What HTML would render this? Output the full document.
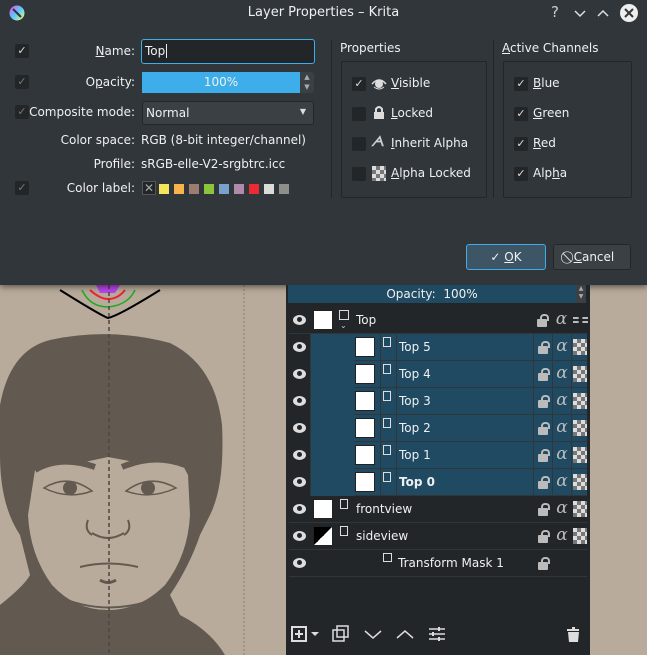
<!DOCTYPE html>
<html><head><meta charset="utf-8"><style>
*{box-sizing:border-box;margin:0;padding:0}
body{width:647px;height:655px;overflow:hidden;background:#b8ab9b;font-family:"DejaVu Sans","Liberation Sans",sans-serif;font-size:12px;color:#eff0f1;position:relative}
.abs{position:absolute}
#dlg{left:0;top:0;width:647px;height:285px;background:#31363b;box-shadow:0 2px 6px rgba(0,0,0,.5)}
.cb{position:absolute;width:14px;height:14px;background:#232629;border-radius:2px;color:#ddd;font-size:11px;line-height:14px;text-align:center}
.lbl{position:absolute;text-align:right;width:120px;left:15px;color:#eff0f1}
.u{text-decoration:underline}
#panel{left:286px;top:285px;width:304px;height:370px;background:#232629}
.alpha{font-family:"DejaVu Serif",serif;font-style:italic;color:#bbb;font-size:17px;line-height:24px;text-align:center}
.chk{background:repeating-conic-gradient(#777 0 25%,#ddd 0 50%) 0 0/8px 8px;}
.r{position:absolute;left:289px;width:298px;height:26px}
.c{position:absolute;top:0;height:26px}
.sel{background:#1f4a62}
.nm{font-size:12px;line-height:26px;padding-left:2px}
.th{position:absolute;width:20px;height:20px;background:#fff;border:1px solid #222;top:3px}
.eyeic{position:absolute;left:4px;top:8px;width:13px;height:10px;border-radius:50%;background:#ddd}
.eyeic:after{content:"";position:absolute;left:4px;top:2px;width:5px;height:5px;border-radius:50%;background:#232629}
.lk{position:absolute;width:10px;height:8px;background:#bbb;top:12px;border-radius:1px}
.lk:before{content:"";position:absolute;left:3px;top:-5px;width:5px;height:5px;border:2px solid #bbb;border-bottom:none;border-radius:4px 4px 0 0}
.doc{position:absolute;width:8px;height:10px;border:1px solid #ddd;top:3px}
</style></head><body>
<svg class="abs" style="left:0;top:285px" width="290" height="370">
<line x1="244" y1="0" x2="244" y2="370" stroke="#8a8070" stroke-width="1" stroke-dasharray="2,2"/>
<path d="M60 5 Q100 30 108 33 Q120 30 160 5" stroke="#000" stroke-width="2" fill="none"/>
<path d="M82 5 Q90 22 108 22 Q128 20 135 5" stroke="#2a2" stroke-width="1.5" fill="none"/>
<path d="M90 5 Q100 14 108 14 Q118 14 125 5" stroke="#e23" stroke-width="2" fill="none"/>
<path d="M96 0 L120 0 L115 8 L100 8Z" fill="#b4e"/>
<path d="M0 120 Q10 65 50 55 Q110 42 170 58 Q215 80 222 140 Q225 200 210 230 L200 250 Q190 280 170 310 L180 330 Q210 345 225 370 L0 370 L0 320 Q25 300 30 290 L20 250 Q0 220 0 170Z" fill="#625a50"/>
<path d="M35 185 L60 175 L80 178 L108 172 L140 178 L180 175 L188 190 L190 230 Q188 270 165 300 Q140 325 108 325 Q75 325 52 300 Q30 270 28 230Z" fill="#b8ab9b"/>
<path d="M35 185 Q60 170 95 182 M122 182 Q155 168 185 180" stroke="#625a50" stroke-width="6" fill="none"/>
<path d="M44 203 Q68 188 92 206 Q68 215 44 203Z M126 206 Q150 188 176 203 Q150 215 126 206Z" fill="none" stroke="#625a50" stroke-width="1.5"/>
<circle cx="70" cy="203" r="7" fill="#625a50"/><circle cx="148" cy="203" r="7" fill="#625a50"/>
<path d="M88 235 Q84 245 92 250 M128 235 Q132 245 124 250 M92 248 Q108 258 124 248" stroke="#625a50" stroke-width="2" fill="none"/>
<path d="M80 282 Q108 275 138 282" stroke="#625a50" stroke-width="2" fill="none"/>
<path d="M100 295 Q108 300 116 295" stroke="#625a50" stroke-width="3" fill="none"/>
<path d="M55 310 Q108 335 165 310" stroke="#625a50" stroke-width="2" fill="none"/>
<line x1="109" y1="0" x2="109" y2="370" stroke="#4e4840" stroke-width="1.5" stroke-dasharray="4,3"/>
</svg>

<div id="dlg" class="abs">
 <svg class="abs" style="left:9px;top:5px" width="16" height="16"><defs><linearGradient id="g" x1="0" y1="0" x2="1" y2="1"><stop offset="0" stop-color="#f4e"/><stop offset=".5" stop-color="#5cf"/><stop offset="1" stop-color="#ff6"/></linearGradient></defs><circle cx="8" cy="8" r="7.5" fill="url(#g)"/><path d="M4 4 L12 12" stroke="#333" stroke-width="2"/></svg>
 <div class="abs" style="left:0;width:647px;top:5px;text-align:center;font-size:13px">Layer Properties – Krita</div>
 <div class="abs" style="left:551px;top:3px;font-size:15px;color:#ccc">?</div>
 <svg class="abs" style="left:573px;top:3px" width="70" height="20"><path d="M2 8 L7 13 L12 8 M25 13 L30 8 L35 13" stroke="#ddd" stroke-width="1.5" fill="none"/><circle cx="56" cy="10" r="9" fill="#eee"/><path d="M52 6 L60 14 M60 6 L52 14" stroke="#31363b" stroke-width="2"/></svg>

 <div class="cb" style="left:15px;top:44px">✓</div>
 <div class="cb" style="left:15px;top:75px;color:#777">✓</div>
 <div class="cb" style="left:15px;top:105px;color:#777">✓</div>
 <div class="cb" style="left:15px;top:181px;color:#777">✓</div>
 <div class="lbl" style="top:44px"><span class="u">N</span>ame:</div>
 <div class="lbl" style="top:75px">O<span class="u">p</span>acity:</div>
 <div class="lbl" style="top:105px">Composite mode:</div>
 <div class="lbl" style="top:133px">Color space:</div>
 <div class="lbl" style="top:157px">Profile:</div>
 <div class="lbl" style="top:181px">Color label:</div>
 <div class="abs" style="left:141px;top:39px;width:174px;height:25px;background:#232629;border:1px solid #3daee9;border-radius:3px;padding:4px 3px">Top<span style="border-left:1px solid #eee;margin-left:1px"></span></div>
 <div class="abs" style="left:142px;top:72px;width:158px;height:21px;background:#3daee9;text-align:center;line-height:21px">100%</div>
 <div class="abs" style="left:300px;top:72px;width:14px;height:21px;background:#3b4045;border-radius:0 3px 3px 0;font-size:7px;color:#aaa;text-align:center;line-height:10px">▲<br>▼</div>
 <div class="abs" style="left:142px;top:101px;width:172px;height:24px;background:#3b4045;border:1px solid #24272a;border-radius:3px;padding:4px 3px">Normal<span style="position:absolute;right:7px;top:5px;font-size:8px;color:#ddd">▼</span></div>
 <div class="abs" style="left:141px;top:133px">RGB (8-bit integer/channel)</div>
 <div class="abs" style="left:141px;top:157px">sRGB-elle-V2-srgbtrc.icc</div>
 <div class="abs" style="left:142px;top:181px;width:14px;height:14px;border:1px solid #555;background:#232629;color:#aaa;font-size:12px;line-height:12px;text-align:center">✕</div>
 <div class="abs" style="left:159px;top:184px;width:10px;height:10px;background:#f5e55a"></div>
 <div class="abs" style="left:174px;top:184px;width:10px;height:10px;background:#f9b34c"></div>
 <div class="abs" style="left:189px;top:184px;width:10px;height:10px;background:#9c7d6f"></div>
 <div class="abs" style="left:204px;top:184px;width:10px;height:10px;background:#8cc43c"></div>
 <div class="abs" style="left:219px;top:184px;width:10px;height:10px;background:#76a2cc"></div>
 <div class="abs" style="left:234px;top:184px;width:10px;height:10px;background:#b08aa8"></div>
 <div class="abs" style="left:249px;top:184px;width:10px;height:10px;background:#ea2b33"></div>
 <div class="abs" style="left:264px;top:184px;width:10px;height:10px;background:#dadcd7"></div>
 <div class="abs" style="left:279px;top:184px;width:10px;height:10px;background:#8e8f8a"></div>

 <div class="abs" style="left:331px;top:40px;width:1px;height:158px;background:#232629"></div>
 <div class="abs" style="left:340px;top:41px">Properties</div>
 <div class="abs" style="left:341px;top:61px;width:146px;height:137px;border:1px solid #232629;border-radius:2px"></div>
 <div class="cb" style="left:352px;top:77px">✓</div>
 <svg class="abs" style="left:371px;top:77px" width="16" height="14"><path d="M1 7 Q8 -1 15 7" stroke="#ddd" stroke-width="1.5" fill="none"/><circle cx="8" cy="7" r="4" fill="#ddd"/><path d="M3 10 Q8 14 13 10" stroke="#ddd" stroke-width="1" fill="none"/></svg>
 <div class="abs" style="left:391px;top:76px"><span class="u">V</span>isible</div>
 <div class="cb" style="left:352px;top:107px"></div>
 <svg class="abs" style="left:373px;top:105px" width="12" height="15"><path d="M3 7 V4 Q6 0 9 4 V7" stroke="#ddd" stroke-width="2" fill="none"/><rect x="1" y="7" width="10" height="7" fill="#ddd"/></svg>
 <div class="abs" style="left:391px;top:106px"><span class="u">L</span>ocked</div>
 <div class="cb" style="left:352px;top:137px"></div>
 <div class="abs" style="left:371px;top:134px;color:#ccc;font-style:italic;font-weight:bold;font-size:14px">ᗅ</div>
 <div class="abs" style="left:391px;top:136px"><span class="u">I</span>nherit Alpha</div>
 <div class="cb" style="left:352px;top:167px"></div><div class="abs chk" style="left:372px;top:166px;width:14px;height:15px"></div>
 <div class="abs" style="left:391px;top:166px"><span class="u">A</span>lpha Locked</div>

 <div class="abs" style="left:493px;top:40px;width:1px;height:158px;background:#232629"></div>
 <div class="abs" style="left:502px;top:41px"><span class="u">A</span>ctive Channels</div>
 <div class="abs" style="left:503px;top:61px;width:129px;height:137px;border:1px solid #232629;border-radius:2px"></div>
 <div class="cb" style="left:514px;top:77px">✓</div><div class="abs" style="left:533px;top:76px"><span class="u">B</span>lue</div>
 <div class="cb" style="left:514px;top:107px">✓</div><div class="abs" style="left:533px;top:106px"><span class="u">G</span>reen</div>
 <div class="cb" style="left:514px;top:137px">✓</div><div class="abs" style="left:533px;top:136px"><span class="u">R</span>ed</div>
 <div class="cb" style="left:514px;top:167px">✓</div><div class="abs" style="left:533px;top:166px">Alp<span class="u">h</span>a</div>

 <div class="abs" style="left:466px;top:244px;width:80px;height:26px;background:#3e5566;border:1px solid #3daee9;border-radius:3px;text-align:center;line-height:24px">✓ <span class="u">O</span>K</div>
 <div class="abs" style="left:553px;top:244px;width:78px;height:26px;background:#3b4045;border:1px solid #24272a;border-radius:3px;text-align:center;line-height:24px">⃠ <span class="u">C</span>ancel</div>
</div>

<div id="panel" class="abs">
 <div class="abs" style="left:2px;top:0;width:288px;height:18px;background:#1f4a62;text-align:center;line-height:18px">Opacity:&nbsp; 100%</div>
 <div class="abs" style="left:290px;top:0;width:10px;height:18px;background:#3b4045;font-size:6px;color:#aaa;text-align:center;line-height:8px">▲<br>▼</div>
</div>
<div class="abs" style="left:289px;top:307px;width:298px;height:270px;background:#31363b"></div>

<div class="r" style="top:307px;background:#232629"><div class="eyeic"></div><div class="th" style="left:24px"></div><div class="doc" style="left:50px;width:10px"></div><div class="c" style="left:51px;top:14px;font-size:8px;color:#ccc">⌄</div><div class="c nm" style="left:65px;width:170px">Top</div><div class="lk" style="left:248px"></div><div class="c alpha" style="left:263px;width:19px">α</div><div class="c" style="left:284px;top:10px;width:15px;height:6px;border-top:2px dashed #bbb;border-bottom:2px dashed #bbb"></div></div>
<div class="r" style="top:334px;height:162px"><div class="c" style="left:0;width:21px;height:162px;background:#232629"></div><div class="c" style="left:22px;width:43px;height:162px;background:#1f4a62"></div></div>

<div class="r" style="top:334px"><div class="eyeic"></div><div class="c sel" style="left:65px;width:26px"></div><div class="c sel" style="left:92px;width:15px"></div><div class="c sel nm" style="left:108px;width:136px">Top 5</div><div class="c sel" style="left:245px;width:18px"></div><div class="c sel" style="left:264px;width:18px"></div><div class="c sel" style="left:283px;width:15px"></div><div class="th" style="left:66px"></div><div class="doc" style="left:94px"></div><div class="lk" style="left:249px"></div><div class="c alpha" style="left:264px;width:18px">α</div><div class="c chk" style="left:284px;top:5px;width:14px;height:16px"></div></div>
<div class="r" style="top:361px"><div class="eyeic"></div><div class="c sel" style="left:65px;width:26px"></div><div class="c sel" style="left:92px;width:15px"></div><div class="c sel nm" style="left:108px;width:136px">Top 4</div><div class="c sel" style="left:245px;width:18px"></div><div class="c sel" style="left:264px;width:18px"></div><div class="c sel" style="left:283px;width:15px"></div><div class="th" style="left:66px"></div><div class="doc" style="left:94px"></div><div class="lk" style="left:249px"></div><div class="c alpha" style="left:264px;width:18px">α</div><div class="c chk" style="left:284px;top:5px;width:14px;height:16px"></div></div>
<div class="r" style="top:388px"><div class="eyeic"></div><div class="c sel" style="left:65px;width:26px"></div><div class="c sel" style="left:92px;width:15px"></div><div class="c sel nm" style="left:108px;width:136px">Top 3</div><div class="c sel" style="left:245px;width:18px"></div><div class="c sel" style="left:264px;width:18px"></div><div class="c sel" style="left:283px;width:15px"></div><div class="th" style="left:66px"></div><div class="doc" style="left:94px"></div><div class="lk" style="left:249px"></div><div class="c alpha" style="left:264px;width:18px">α</div><div class="c chk" style="left:284px;top:5px;width:14px;height:16px"></div></div>
<div class="r" style="top:415px"><div class="eyeic"></div><div class="c sel" style="left:65px;width:26px"></div><div class="c sel" style="left:92px;width:15px"></div><div class="c sel nm" style="left:108px;width:136px">Top 2</div><div class="c sel" style="left:245px;width:18px"></div><div class="c sel" style="left:264px;width:18px"></div><div class="c sel" style="left:283px;width:15px"></div><div class="th" style="left:66px"></div><div class="doc" style="left:94px"></div><div class="lk" style="left:249px"></div><div class="c alpha" style="left:264px;width:18px">α</div><div class="c chk" style="left:284px;top:5px;width:14px;height:16px"></div></div>
<div class="r" style="top:442px"><div class="eyeic"></div><div class="c sel" style="left:65px;width:26px"></div><div class="c sel" style="left:92px;width:15px"></div><div class="c sel nm" style="left:108px;width:136px">Top 1</div><div class="c sel" style="left:245px;width:18px"></div><div class="c sel" style="left:264px;width:18px"></div><div class="c sel" style="left:283px;width:15px"></div><div class="th" style="left:66px"></div><div class="doc" style="left:94px"></div><div class="lk" style="left:249px"></div><div class="c alpha" style="left:264px;width:18px">α</div><div class="c chk" style="left:284px;top:5px;width:14px;height:16px"></div></div>
<div class="r" style="top:469px"><div class="eyeic"></div><div class="c sel" style="left:65px;width:26px"></div><div class="c sel" style="left:92px;width:15px"></div><div class="c sel nm" style="left:108px;width:136px;font-weight:bold">Top 0</div><div class="c sel" style="left:245px;width:18px"></div><div class="c sel" style="left:264px;width:18px"></div><div class="c sel" style="left:283px;width:15px"></div><div class="th" style="left:66px"></div><div class="doc" style="left:94px"></div><div class="lk" style="left:249px"></div><div class="c alpha" style="left:264px;width:18px">α</div><div class="c chk" style="left:284px;top:5px;width:14px;height:16px"></div></div>

<div class="r" style="top:496px;background:#232629"><div class="eyeic"></div><div class="th" style="left:24px"></div><div class="doc" style="left:51px"></div><div class="c nm" style="left:65px;width:170px">frontview</div><div class="lk" style="left:249px"></div><div class="c alpha" style="left:264px;width:18px">α</div><div class="c chk" style="left:284px;top:5px;width:14px;height:16px"></div></div>
<div class="r" style="top:523px;background:#232629"><div class="eyeic"></div><div class="th" style="left:24px;background:linear-gradient(135deg,#000 50%,#fff 50%)"></div><div class="doc" style="left:51px"></div><div class="c nm" style="left:65px;width:170px">sideview</div><div class="lk" style="left:249px"></div><div class="c alpha" style="left:264px;width:18px">α</div><div class="c chk" style="left:284px;top:5px;width:14px;height:16px"></div></div>
<div class="r" style="top:550px;background:#232629"><div class="eyeic"></div><div class="doc" style="left:94px;width:9px;height:9px"></div><div class="c nm" style="left:107px;width:140px">Transform Mask 1</div><div class="lk" style="left:249px"></div></div>

<svg class="abs" style="left:289px;top:622px" width="300" height="24">
<rect x="3" y="5" width="14" height="14" fill="none" stroke="#ddd" stroke-width="2"/><path d="M10 8v8M6 12h8" stroke="#ddd" stroke-width="2"/>
<path d="M22 10h8l-4 4z" fill="#ddd"/>
<rect x="44" y="8" width="11" height="11" fill="none" stroke="#ddd" stroke-width="1.5"/><rect x="48" y="4" width="11" height="11" fill="none" stroke="#ddd" stroke-width="1.5"/>
<path d="M76 9l8 7 8-7" stroke="#ddd" stroke-width="1.5" fill="none"/>
<path d="M108 16l8-7 8 7" stroke="#ddd" stroke-width="1.5" fill="none"/>
<path d="M140 7h16M140 12h16M140 17h16" stroke="#ddd" stroke-width="1.5"/><rect x="149" y="5" width="2" height="4" fill="#ddd"/><rect x="143" y="10" width="2" height="4" fill="#ddd"/><rect x="149" y="15" width="2" height="4" fill="#ddd"/>
<path d="M278 8h12M283 6h3" stroke="#ddd" stroke-width="2"/><path d="M279 10h11l-1 10h-9z" fill="#ddd"/>
</svg>
</body></html>
